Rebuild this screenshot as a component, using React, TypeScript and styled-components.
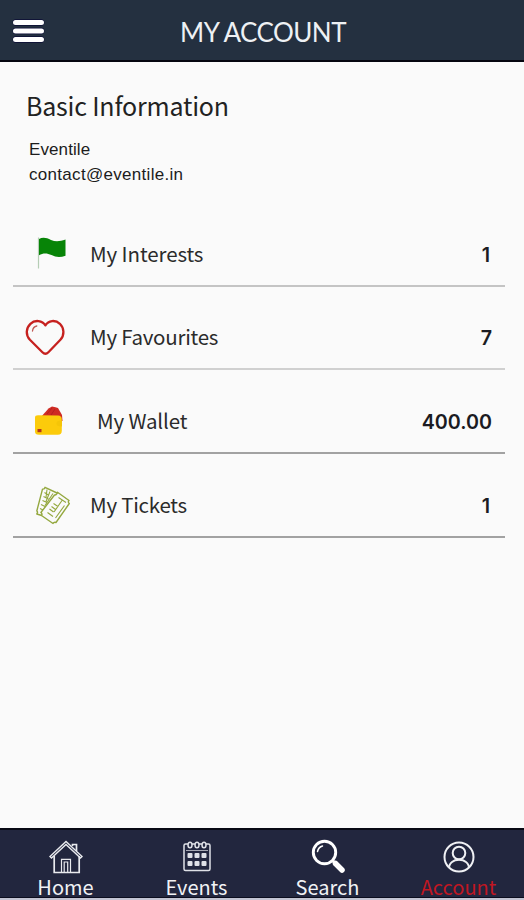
import React from 'react';
import styled, { createGlobalStyle } from 'styled-components';

const GlobalStyle = createGlobalStyle`
  * { box-sizing: border-box; }
  html, body { margin: 0; padding: 0; background: #fafafa; }
  body { font-family: 'Noto Sans CJK SC', 'Noto Sans', sans-serif; color: #222; }
`;

const Screen = styled.div`
  width: 524px;
  height: 900px;
  display: flex;
  flex-direction: column;
  background: #fafafa;
  overflow: hidden;
`;

const Header = styled.header`
  height: 62px;
  flex: none;
  display: grid;
  grid-template-columns: 56px 1fr 56px;
  background: #243040;
  border-bottom: 2px solid #05060f;
`;

const MenuButton = styled.button`
  border: 0;
  padding: 19px 0 0 12px;
  background: none;
  display: flex;
  align-items: flex-start;
`;

const Title = styled.h1`
  margin: 0;
  padding-left: 2px;
  text-align: center;
  color: #eef1f4;
  font: 400 26px/64px Lato, sans-serif;
  letter-spacing: -0.55px;
  white-space: nowrap;
`;

const Content = styled.main`
  flex: 1;
  padding: 26px 19px 0 13px;
`;

const Profile = styled.section`
  height: 115px;
  padding-left: 13px;
`;

const SectionTitle = styled.h2`
  margin: 0;
  font-size: 25px;
  font-weight: 400;
  line-height: 34px;
  height: 36px;
  letter-spacing: -0.2px;
  color: #222;
`;

const ProfileLine = styled.p<{ $spacing: number }>`
  margin: 0 0 0 3px;
  font: 400 17px/25px 'Liberation Sans', Arial, sans-serif;
  letter-spacing: ${p => p.$spacing}px;
  color: #1c1c1c;
  &:first-of-type { padding-top: 13px; height: 38px; }
`;

const Row = styled.div<{ $height: number; $line: string }>`
  height: ${p => p.$height}px;
  display: flex;
  align-items: flex-end;
  padding: 0 13px 0 12px;
  border-bottom: 2px solid ${p => p.$line};
`;

const RowIcon = styled.span`
  width: 48px;
  height: 62px;
  display: flex;
  align-items: center;
`;

const RowLabel = styled.span<{ $indent?: number; $spacing: number }>`
  flex: 1;
  padding-left: ${p => 17 + (p.$indent ?? 0)}px;
  padding-bottom: 1px;
  font-size: 20.5px;
  line-height: 62px;
  letter-spacing: ${p => p.$spacing}px;
  color: #2b2b2b;
`;

const RowValue = styled.span<{ $inset?: number }>`
  padding-right: ${p => p.$inset ?? 0}px;
  font: 600 19.7px/60px Inter, sans-serif;
  color: #1b1b22;
`;

const TabBar = styled.nav`
  height: 72px;
  flex: none;
  display: grid;
  grid-template-columns: repeat(4, 1fr);
  background: #22263e;
  border-top: 2px solid #080914;
  border-bottom: 2px solid #c3c4d2;
  box-shadow: inset 0 -1px 0 #0b0d1e;
`;

const Tab = styled.div<{ $active?: boolean }>`
  display: flex;
  flex-direction: column;
  align-items: center;
  padding-top: 9px;
  color: ${p => (p.$active ? '#c01722' : '#f1f2f5')};
  font-size: 20px;
  line-height: 23px;
  svg { flex: none; display: block; }
`;

const MenuIcon = () => (
  <svg width="34" height="26" viewBox="0 0 34 26">
    <g stroke="#0a0b35" strokeWidth="6.6" strokeLinecap="round"><path d="M4 3.5h25M4 12h25M4 20.5h25" /></g>
    <g stroke="#fff" strokeWidth="5" strokeLinecap="round"><path d="M3.5 3.5h26M3.5 12h26M3.5 20.5h26" /></g>
  </svg>
);

const FlagIcon = () => (
  <svg width="48" height="40" viewBox="0 0 48 40">
    <path d="M13.5 3.500v31" stroke="#b5cdb5" strokeWidth="1.2" />
    <path d="M14 5c3.500-1.800 7.500-1.400 12 .9 4.500 2 9 1.500 14.500-.4v16.200c-5 2-9.500 1.800-14-.6-4.500-2.200-8.500-2.200-12.500.2z" fill="#078407" />
  </svg>
);

const HeartIcon = () => (
  <svg width="41" height="40" viewBox="0 0 41 40" fill="none">
    <path d="M20.500 7.500C17.500 2.500 10 1.700 5.500 6c-4.700 4.500-4.800 11.500-.5 16L17.500 34.500c2 2 4 2 6 0L35.500 22c4.200-4.500 4-11.500-.5-16C30.500 1.700 23.500 2.500 20.500 7.500z" transform="translate(-.1 .8)" stroke="#c6211f" strokeWidth="2.300" strokeLinejoin="round" />
    <path d="M7.500 14c.3-2.800 1.800-4.500 4.300-5" stroke="#c25b57" strokeWidth="1.300" strokeLinecap="round" />
  </svg>
);

const WalletIcon = () => (
  <svg width="48" height="40" viewBox="0 0 48 40">
    <path d="M16 16l7.500-8.500 3.500-2 3.500.8 2.500.7 4 7 .5 6H16z" fill="#cf2b23" />
    <path d="M22 13l5-6M26 14l4-6" stroke="#b5201f" strokeWidth="1" />
    <path d="M13 14.200l20 .3c2.800.2 3.800 1.500 3.800 4v11c0 3-1.200 4.200-4 4.200H14c-3 0-4-1-4-3.500V16.500c0-1.600 1-2.300 3-2.300z" fill="#fccb0b" />
    <path d="M37 19.500l-4 .5c-2 .8-2 4.200 0 5l4 .5z" fill="#f5c508" />
    <path d="M12.500 28h4v3.200h-4z" fill="#b3331d" />
  </svg>
);

const TicketsIcon = () => (
  <svg width="48" height="40" viewBox="0 0 48 40" fill="none" stroke="#94a83f" strokeWidth="1.400" strokeLinejoin="round">
    <path d="M32.500 7.200L44 15.500c-1 1-.9 2 .3 3L31 37.500c-1.500-.6-2.300-.2-3 1L16.500 30.500c.8-1.200.5-2.200-.6-3L29.500 10c1.600.2 2.600-1 3-2.800z" />
    <path d="M32 8L20 2.300c-.3 1.500-1.200 2-2.500 1.800L11.800 26c1 .8 1 1.700 0 3l5 1.500" />
    <path d="M19.500 7.500l4.500 3M18.500 11.500l5 2.500M17.500 15.500l4.500 2M22 4.500l-1 8M16 19.500l4 2M15 23.500l3 1.500M25 6.500l-4 10M28 8.500l-8 12" strokeWidth="1.100" />
    <path d="M33.500 12.500l7.500 5M37 15.500l-8 11.500M28.500 18.500l4.500 3M26.500 21.500l4 3M24.500 24l4 3M39.500 20.500l-9 12.500M22.500 27.500l5.500 4" strokeWidth="1.100" />
  </svg>
);

const HomeIcon = () => (
  <svg width="36" height="36" viewBox="0 0 36 36" fill="none" stroke="#e9eaee" strokeWidth="1.700">
    <path d="M24.500 7V5.500h4V12" />
    <path d="M2 17.500L18 2.500l16 15-1.500 1.500L18 5.500 3.500 19z" strokeWidth="1.400" />
    <path d="M6.200 17v16.500h25V17" />
    <path d="M13.500 33.500V20.300h9v13.200M16.200 33.500V23h3.500v10.500" strokeWidth="1.200" />
  </svg>
);

const CalendarIcon = () => (
  <svg width="36" height="36" viewBox="0 0 36 36" fill="none" stroke="#dfe1e7" strokeWidth="1.500">
    <rect x="5" y="5" width="26" height="26.500" rx="1.500" />
    {[11, 18, 25].map(x => (
      <g key={x}>
        <ellipse cx={x} cy="6" rx="2" ry="2.800" fill="#22263e" />
        <rect x={x - 2.500} y="14" width="5" height="5" rx="1" fill="#dfe1e7" stroke="none" />
        <rect x={x - 2.500} y="22" width="5" height="5" rx="1" fill="#dfe1e7" stroke="none" />
      </g>
    ))}
    <path d="M7 11.500h22" strokeWidth=".7" />
  </svg>
);

const SearchIcon = () => (
  <svg width="36" height="36" viewBox="0 0 36 36" fill="none" stroke="#fff">
    <circle cx="14.500" cy="13.500" r="11.200" strokeWidth="2.900" />
    <path d="M7.500 12.500c.7-3 2.400-4.800 5-5.500" strokeWidth="1.500" strokeLinecap="round" />
    <path d="M22.500 21.500l2.500 2.500" strokeWidth="3" />
    <path d="M25.500 24.500l6.500 6.500" strokeWidth="5.500" strokeLinecap="round" />
  </svg>
);

const AccountIcon = () => (
  <svg width="36" height="36" viewBox="0 0 36 36" fill="none" stroke="#f0f1f4" strokeWidth="2">
    <circle cx="18" cy="18" r="14.500" />
    <circle cx="18" cy="14" r="6.300" />
    <path d="M8.500 28c-.5-1 .5-3.500 2.500-5 1.800-1.500 4-2.200 7-2.200s5.200.7 7 2.200c2 1.500 3 4 2.500 5" />
  </svg>
);

const rows = [
  { label: 'My Interests', value: '1', Icon: FlagIcon, height: 84, line: '#c4c4c4', spacing: -0.1, inset: 2 },
  { label: 'My Favourites', value: '7', Icon: HeartIcon, height: 83, line: '#d0d0d0', spacing: -0.25 },
  { label: 'My Wallet', value: '400.00', Icon: WalletIcon, height: 84, line: '#a2a2a2', spacing: -0.15, indent: 7 },
  { label: 'My Tickets', value: '1', Icon: TicketsIcon, height: 84, line: '#a2a2a2', spacing: -0.25, inset: 2 },
];

const tabs = [
  { label: 'Home', Icon: HomeIcon },
  { label: 'Events', Icon: CalendarIcon },
  { label: 'Search', Icon: SearchIcon },
  { label: 'Account', Icon: AccountIcon, active: true },
];

export default function App() {
  return (
    <Screen>
      <GlobalStyle />
      <Header>
        <MenuButton aria-label="Menu"><MenuIcon /></MenuButton>
        <Title>MY ACCOUNT</Title>
      </Header>
      <Content>
        <Profile>
          <SectionTitle>Basic Information</SectionTitle>
          <ProfileLine $spacing={0.1}>Eventile</ProfileLine>
          <ProfileLine $spacing={0.3}>contact@eventile.in</ProfileLine>
        </Profile>
        {rows.map(({ label, value, Icon, height, line, spacing, indent, inset }) => (
          <Row key={label} $height={height} $line={line}>
            <RowIcon><Icon /></RowIcon>
            <RowLabel $indent={indent} $spacing={spacing}>{label}</RowLabel>
            <RowValue $inset={inset}>{value}</RowValue>
          </Row>
        ))}
      </Content>
      <TabBar>
        {tabs.map(({ label, Icon, active }) => (
          <Tab key={label} $active={active}>
            <Icon />
            <span>{label}</span>
          </Tab>
        ))}
      </TabBar>
    </Screen>
  );
}
